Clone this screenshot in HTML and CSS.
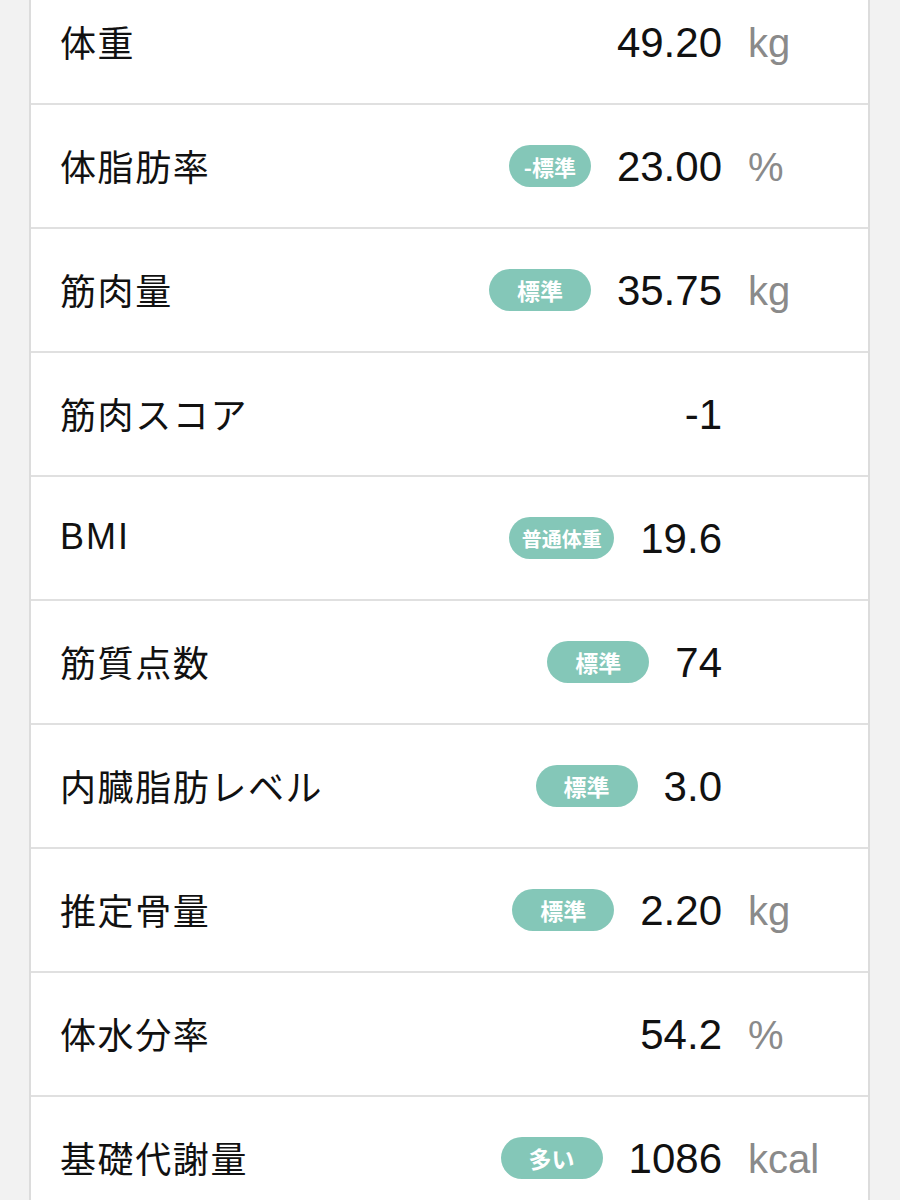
FILE: index.html
```html
<!DOCTYPE html>
<html lang="ja">
<head>
<meta charset="utf-8">
<link rel="stylesheet" href="styles.css">
</head>
<body>
<div class="card">
  <div class="row"><div class="label">体重</div><div class="value">49.20</div><div class="unit">kg</div></div>
  <div class="row"><div class="label">体脂肪率</div><div class="badge badge-narrow">-標準</div><div class="value">23.00</div><div class="unit">%</div></div>
  <div class="row"><div class="label">筋肉量</div><div class="badge">標準</div><div class="value">35.75</div><div class="unit">kg</div></div>
  <div class="row"><div class="label">筋肉スコア</div><div class="value">-1</div><div class="unit"></div></div>
  <div class="row"><div class="label label-latin">BMI</div><div class="badge badge-long">普通体重</div><div class="value">19.6</div><div class="unit"></div></div>
  <div class="row"><div class="label">筋質点数</div><div class="badge">標準</div><div class="value">74</div><div class="unit"></div></div>
  <div class="row"><div class="label">内臓脂肪レベル</div><div class="badge">標準</div><div class="value">3.0</div><div class="unit"></div></div>
  <div class="row"><div class="label">推定骨量</div><div class="badge">標準</div><div class="value">2.20</div><div class="unit">kg</div></div>
  <div class="row"><div class="label">体水分率</div><div class="value">54.2</div><div class="unit">%</div></div>
  <div class="row"><div class="label">基礎代謝量</div><div class="badge">多い</div><div class="value">1086</div><div class="unit">kcal</div></div>
</div>
</body>
</html>
```
FILE: styles.css
```css
html, body {
  margin: 0;
  padding: 0;
  background: #f2f2f2;
}
body {
  font-family: "Liberation Sans", "Noto Sans CJK JP", sans-serif;
  color: #111;
  overflow: hidden;
  height: 1200px;
}
.card {
  margin: -19px 30px 0 29px;
  background: #fff;
  border-left: 2px solid #dcdcdc;
  border-right: 2px solid #dcdcdc;
}
.row {
  display: flex;
  align-items: center;
  height: 122px;
  border-bottom: 2px solid #e0e0e0;
  padding-left: 29px;
}
.label {
  flex: 1;
  font-family: "Noto Sans CJK JP", sans-serif;
  font-size: 36px;
  letter-spacing: 1.6px;
  color: #111;
  padding-bottom: 3px;
}
.label-latin {
  font-family: "Liberation Sans", "Noto Sans CJK JP", sans-serif;
  letter-spacing: 2px;
}
.badge {
  min-width: 102px;
  height: 42px;
  box-sizing: border-box;
  padding: 0 8px;
  border-radius: 21px;
  background: #84c7b8;
  color: #fff;
  font-family: "Noto Sans CJK JP", sans-serif;
  font-weight: 700;
  font-size: 23px;
  display: flex;
  align-items: center;
  justify-content: center;
  margin-right: 26px;
}
.badge-narrow {
  min-width: 82px;
  padding: 0 6px;
  font-size: 22px;
}
.badge-long {
  font-size: 20px;
  min-width: 105px;
}
.value {
  font-size: 42px;
  color: #111;
  text-align: right;
  padding-top: 2px;
}
.unit {
  width: 120px;
  padding-left: 26px;
  padding-top: 2px;
  font-size: 40px;
  color: #8a8a8a;
}
```
